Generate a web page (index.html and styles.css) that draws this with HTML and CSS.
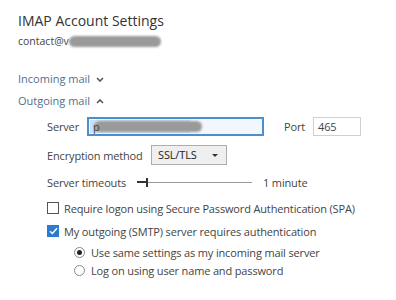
FILE: index.html
```html
<!DOCTYPE html>
<html lang="en">
<head>
  <meta charset="UTF-8">
  <title>IMAP Account Settings</title>
  <link rel="stylesheet" href="styles.css">
</head>
<body>
  <div class="page">
    <h1>IMAP Account Settings</h1>
    <div class="account">contact@v<span class="blur blur-account"></span></div>

    <div class="section-head">Incoming mail
      <svg class="chev" width="8" height="5" viewBox="0 0 8 5"><path d="M1 1 L4 4 L7 1" fill="none" stroke="#555" stroke-width="1.6"/></svg>
    </div>
    <div class="section-head open">Outgoing mail
      <svg class="chev" width="8" height="5" viewBox="0 0 8 5"><path d="M1 4 L4 1 L7 4" fill="none" stroke="#555" stroke-width="1.6"/></svg>
    </div>

    <div class="settings">
      <div class="row">
        <label class="lbl short">Server</label>
        <div class="input server"><span class="sel"></span><span class="blur blur-server"></span><span class="ch">p</span></div>
        <label class="port-lbl">Port</label>
        <div class="input port">465</div>
      </div>
      <div class="row enc">
        <label class="lbl">Encryption method</label>
        <div class="select">SSL/TLS <span class="arrow"></span></div>
      </div>
      <div class="row">
        <label class="lbl">Server timeouts</label>
        <div class="slider"><span class="thumb"></span></div>
        <span class="value">1 minute</span>
      </div>
      <div class="check-row first">
        <span class="box"></span>
        Require logon using Secure Password Authentication (SPA)
      </div>
      <div class="check-row">
        <span class="box checked">
          <svg width="9" height="8" viewBox="0 0 9 8"><path d="M1 4.2 L3.4 6.5 L8 1.3" fill="none" stroke="#fff" stroke-width="1.5"/></svg>
        </span>
        My outgoing (SMTP) server requires authentication
      </div>
      <div class="radio-row">
        <span class="radio on"></span>
        Use same settings as my incoming mail server
      </div>
      <div class="radio-row">
        <span class="radio"></span>
        Log on using user name and password
      </div>
    </div>
  </div>
</body>
</html>
```

FILE: styles.css
```css
body {
  margin: 0;
  background: #fff;
  font-family: 'Open Sans', 'Noto Sans', sans-serif;
  color: #444;
}
.page {
  padding: 10px 18px;
}
h1 {
  margin: 0;
  font-size: 14px;
  font-weight: normal;
  color: #333;
  line-height: 22px;
}
.account {
  font-size: 10.5px;
  color: #444;
  margin-top: 2px;
  display: flex;
  align-items: center;
}
.blur {
  display: inline-block;
  background: #9a9a9a;
  border-radius: 6px;
  filter: blur(1px);
}
.blur-account {
  width: 92px;
  height: 11px;
}
.section-head {
  font-size: 11px;
  color: #52708c;
  margin-top: 23px;
  line-height: 16px;
  display: flex;
  align-items: center;
}
.section-head.open {
  margin-top: 6px;
}
.chev {
  margin-left: 6px;
}
.settings {
  padding-left: 29px;
  font-size: 11px;
  letter-spacing: -0.15px;
  color: #444;
}
.row {
  display: flex;
  align-items: center;
  height: 20px;
  margin-top: 7px;
}
.row.enc {
  margin-top: 9px;
}
.lbl {
  width: 104px;
}
.lbl.short {
  width: 40px;
}
.input {
  height: 17px;
  border: 1px solid #cfcfcf;
  font-size: 11px;
  line-height: 17px;
  padding: 0 4px;
  box-sizing: content-box;
}
.server {
  position: relative;
  width: 165px;
  border: 2px solid #4a8fd0;
  height: 15px;
  line-height: 15px;
  background: #f1f7fd;
}
.sel {
  position: absolute;
  left: 1px; top: 1px; bottom: 1px;
  width: 100px;
  background: #cde2f7;
}
.blur-server {
  position: absolute;
  left: 5px; top: 2px;
  width: 108px;
  height: 11px;
}
.ch {
  position: relative;
}
.port-lbl {
  margin-left: 20px;
  margin-right: 8px;
}
.port {
  width: 38px;
}
.select {
  width: 62px;
  height: 18px;
  border: 1px solid #adadad;
  background: #efefef;
  padding: 0 6px;
  line-height: 18px;
  color: #222;
  position: relative;
}
.arrow {
  position: absolute;
  right: 8px; top: 8px;
  border-left: 3px solid transparent;
  border-right: 3px solid transparent;
  border-top: 3px solid #333;
}
.slider {
  position: relative;
  width: 115px;
  height: 1px;
  background: #999;
  margin-left: -14px;
}
.thumb {
  position: absolute;
  left: 9px; top: -4px;
  width: 2px;
  height: 9px;
  background: #333;
}
.slider::before {
  content: "";
  position: absolute;
  left: 0; top: -0.5px;
  width: 10px;
  height: 2px;
  background: #333;
}
.value {
  margin-left: 11px;
}
.check-row, .radio-row {
  display: flex;
  align-items: center;
  height: 18px;
  margin-top: 5px;
}
.check-row.first {
  margin-top: 7px;
}
.box {
  width: 10px;
  height: 10px;
  border: 1px solid #555;
  margin-right: 5px;
  display: flex;
  align-items: center;
  justify-content: center;
}
.box.checked {
  background: #2a7bd1;
  border-color: #2a7bd1;
}
.radio-row {
  padding-left: 27px;
  margin-top: 3px;
}
.radio-row + .radio-row {
  margin-top: 0;
}
.radio {
  width: 9px;
  height: 9px;
  border: 1px solid #888;
  border-radius: 50%;
  margin-right: 6px;
  position: relative;
}
.radio.on::after {
  content: "";
  position: absolute;
  left: 2px; top: 2px;
  width: 5px; height: 5px;
  border-radius: 50%;
  background: #222;
}
```
